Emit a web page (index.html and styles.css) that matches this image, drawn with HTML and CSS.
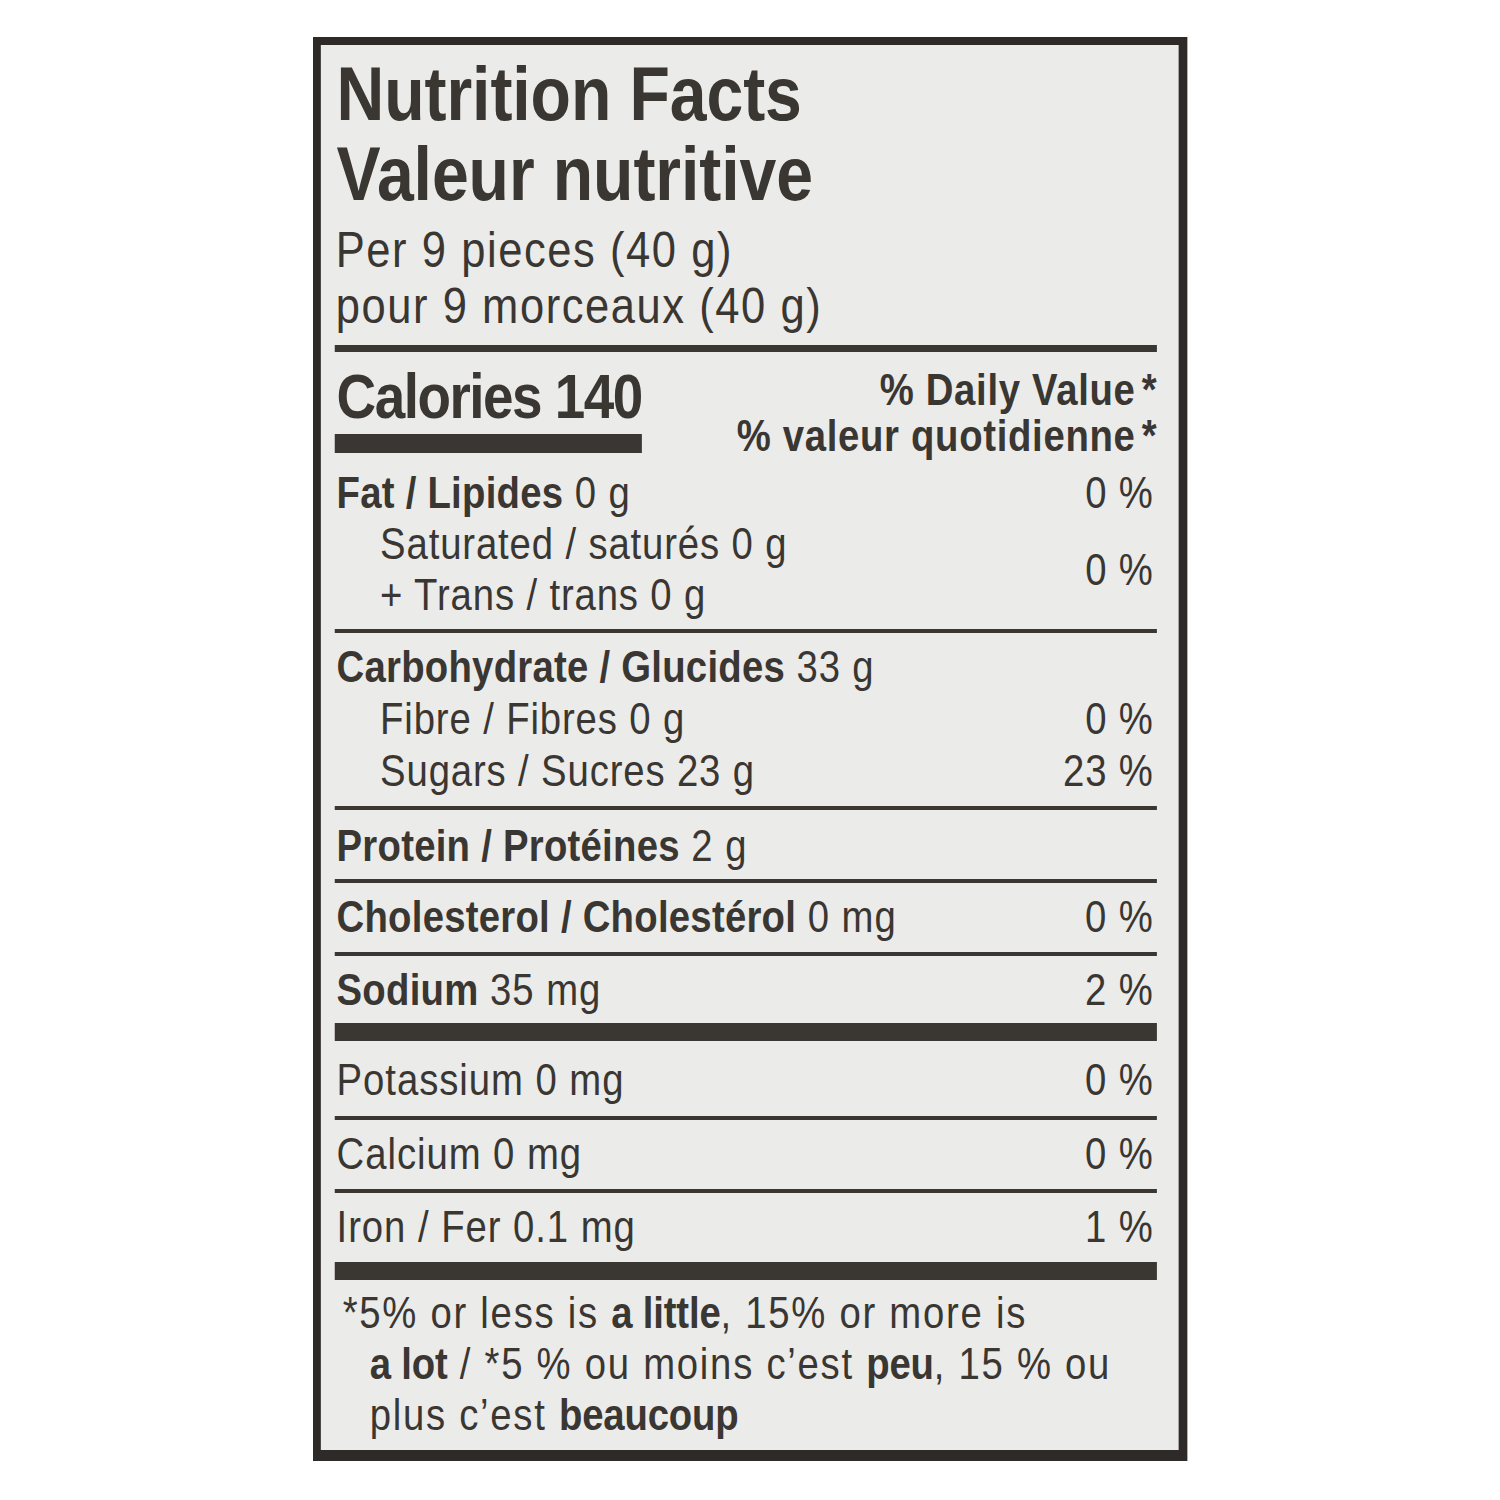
FILE: index.html
```html
<!DOCTYPE html>
<html lang="en">
<head>
<meta charset="utf-8">
<title>Nutrition Facts</title>
<link rel="stylesheet" href="styles.css">
</head>
<body>
<div class="label">
  <div class="title">Nutrition Facts<br>Valeur nutritive</div>
  <div class="serving">Per 9 pieces (40 g)<br>pour 9 morceaux (40 g)</div>
  <div class="rule rule-top"></div>

  <div class="cal">
    <div class="cal-left">
      <div class="cal-text">Calories 140</div>
      <div class="cal-bar"></div>
    </div>
    <div class="dv-head">
      <div>% Daily Value<span class="ast">*</span></div>
      <div>% valeur quotidienne<span class="ast">*</span></div>
    </div>
  </div>

  <div class="group group-fat">
    <div class="row"><span><b>Fat / Lipides</b> 0 g</span><span class="pct">0 %</span></div>
    <div class="pair">
      <div class="subs">
        <div class="sub">Saturated / saturés 0 g</div>
        <div class="sub">+ Trans / trans 0 g</div>
      </div>
      <div class="pct">0 %</div>
    </div>
  </div>
  <div class="rule"></div>

  <div class="group group-carb">
    <div class="row"><span><b>Carbohydrate / Glucides</b> 33 g</span></div>
    <div class="row sub"><span>Fibre / Fibres 0 g</span><span class="pct">0 %</span></div>
    <div class="row sub"><span>Sugars / Sucres 23 g</span><span class="pct">23 %</span></div>
  </div>
  <div class="rule"></div>

  <div class="single single-protein"><span><b>Protein / Protéines</b> 2 g</span></div>
  <div class="rule"></div>

  <div class="single"><span><b>Cholesterol / Cholestérol</b> 0 mg</span><span class="pct">0 %</span></div>
  <div class="rule"></div>

  <div class="single single-sodium"><span><b>Sodium</b> 35 mg</span><span class="pct">2 %</span></div>
  <div class="bar"></div>

  <div class="single single-after-bar"><span>Potassium 0 mg</span><span class="pct">0 %</span></div>
  <div class="rule"></div>

  <div class="single"><span>Calcium 0 mg</span><span class="pct">0 %</span></div>
  <div class="rule"></div>

  <div class="single"><span>Iron / Fer 0.1 mg</span><span class="pct">1 %</span></div>
  <div class="bar"></div>

  <div class="foot">*5% or less is <b>a little</b>, 15% or more is<br><b>a lot</b> / *5 % ou moins c’est <b>peu</b>, 15 % ou<br>plus c’est <b>beaucoup</b></div>
</div>
</body>
</html>
```

FILE: styles.css
```css
html, body {
  margin: 0;
  background: #ffffff;
}

body {
  padding: 37px 0 0 313px;
  font-family: "Liberation Sans", Arial, sans-serif;
  color: #3a3632;
}

/* The label type is a condensed grotesque; the whole card is drawn
   with Liberation Sans and squeezed horizontally to the same width. */
.label {
  width: 1004.6px;
  box-sizing: border-box;
  transform: scaleX(0.87);
  transform-origin: 0 0;
  border-style: solid;
  border-color: #2e2a27;
  border-width: 8px 10.3px 11px 9.2px;
  background: #ebebea;
  padding: 9px 24.2px 10px 16.1px;
}

b {
  font-weight: 700;
  letter-spacing: 0.3px;
}

.title {
  font-size: 76px;
  line-height: 80px;
  font-weight: 700;
  letter-spacing: -0.1px;
  padding-left: 2px;
  white-space: nowrap;
}

.serving {
  margin-top: 8px;
  font-size: 50px;
  line-height: 56px;
  letter-spacing: 1.8px;
  padding-left: 1px;
  white-space: nowrap;
}

.rule {
  height: 4px;
  background: #3a3632;
}

.rule-top {
  margin-top: 11px;
  height: 7px;
}

.bar {
  height: 18px;
  background: #3a3632;
}

.cal {
  display: flex;
  justify-content: space-between;
  align-items: flex-start;
  height: 107px;
}

.cal-left {
  padding-top: 9px;
  width: 353px;
}

.cal-text {
  font-size: 63px;
  line-height: 70px;
  font-weight: 700;
  letter-spacing: -1.7px;
  padding-left: 2px;
  white-space: nowrap;
}

.cal-bar {
  margin-top: 3px;
  height: 19px;
  background: #3a3632;
}

.dv-head {
  padding-top: 15px;
  text-align: right;
  font-size: 44px;
  line-height: 46px;
  font-weight: 700;
  letter-spacing: 0.8px;
  white-space: nowrap;
}

.ast {
  margin-left: 7px;
}

.group {
  font-size: 44px;
  letter-spacing: 1px;
  white-space: nowrap;
}

.group-fat {
  line-height: 51px;
  padding: 8px 0 9px;
}

.group-carb {
  line-height: 52px;
  padding: 8px 0 9px;
}

.row {
  display: flex;
  justify-content: space-between;
  padding-left: 2px;
}

.sub {
  padding-left: 52px;
}

.row.sub {
  padding-left: 52px;
}

.pair {
  display: flex;
  justify-content: space-between;
  align-items: center;
}

.pct {
  text-align: right;
  padding-right: 4px;
}

.single {
  display: flex;
  justify-content: space-between;
  padding: 8px 0 9px 2px;
  font-size: 44px;
  line-height: 52px;
  letter-spacing: 1.1px;
  white-space: nowrap;
}

.single-protein {
  padding-top: 10px;
  padding-bottom: 7px;
}

.single-sodium {
  padding-bottom: 7px;
}

.single-after-bar {
  padding-top: 13px;
  padding-bottom: 10px;
}

.foot {
  padding: 7px 0 0 40px;
  text-indent: -31px;
  font-size: 44px;
  line-height: 51px;
  letter-spacing: 2px;
  white-space: nowrap;
}

.foot b {
  letter-spacing: -0.2px;
}
```
